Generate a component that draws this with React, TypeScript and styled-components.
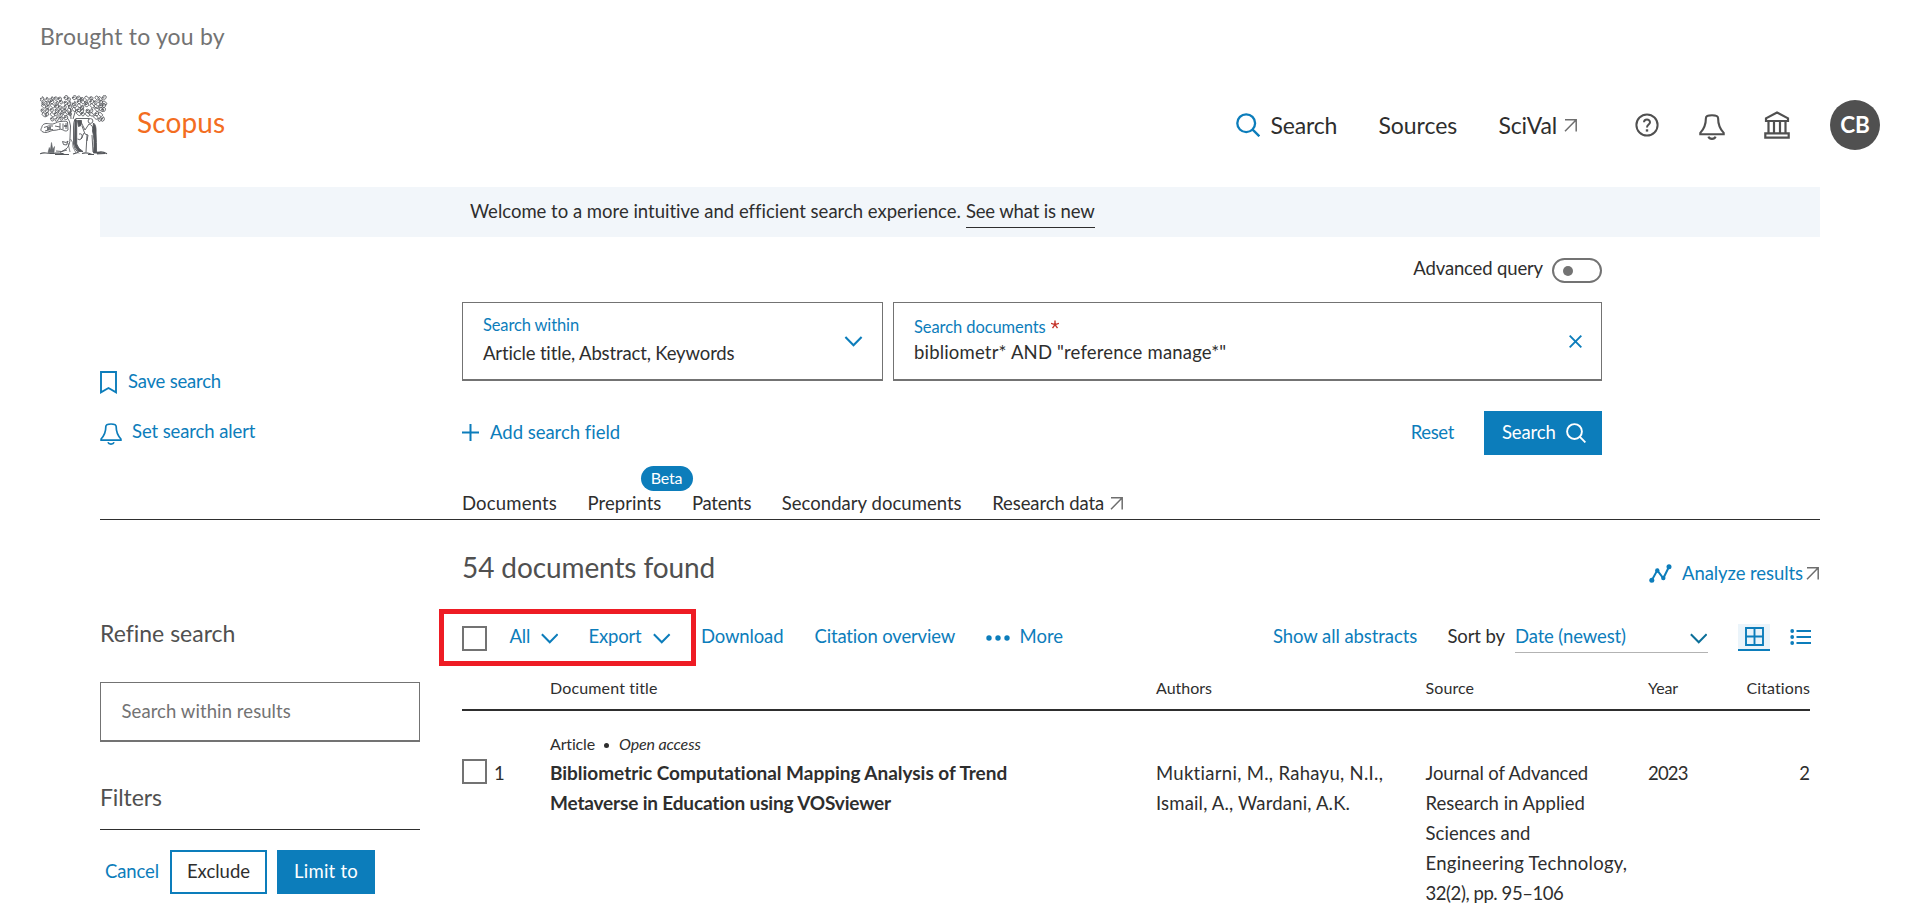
import React from 'react';
import styled, { createGlobalStyle } from 'styled-components';

const BLUE = '#0c7dbb';
const INK = '#2e2e2e';
const GREY = '#737373';

const Global = createGlobalStyle`
  * { box-sizing: border-box; }
  body { margin: 0; background: #fff; overflow: hidden; }
  svg { display: block; flex: none; fill: none; }
`;

const Page = styled.div`
  width: 1920px;
  height: 913px;
  overflow: hidden;
  font-family: Lato, 'Open Sans', sans-serif;
  font-size: 18.5px;
  line-height: 24px;
  font-variant-ligatures: none;
  color: ${INK};
`;

/* Text run with its own tracking */
const Txt = styled.span<{ $ls?: number }>`
  display: block;
  white-space: nowrap;
  letter-spacing: ${p => p.$ls ?? 0}px;
`;

const Sponsor = styled.div`
  padding: 21px 0 0 40px;
  height: 63px;
  font-size: 23px;
  line-height: 30px;
  color: ${GREY};
`;

const Masthead = styled.header`
  display: flex;
  align-items: center;
  height: 124px;
  padding: 0 40px;
`;

const Brand = styled.div`
  margin: -7px 0 0 29px;
  font-size: 28px;
  line-height: 36px;
  color: #f36d21;
`;

const Nav = styled.nav`
  display: grid;
  grid-template-columns: 34.5px 108px 120px 65px 71.5px 64px 65px 66px 50px;
  align-items: center;
  margin-left: auto;
  font-size: 23px;
  line-height: 30px;
`;

const Lowered = styled.div`
  padding-top: 4px;
`;

const Avatar = styled.div`
  width: 50px;
  height: 50px;
  border-radius: 50%;
  background: #505050;
  color: #fff;
  font-size: 22.5px;
  font-weight: 700;
  line-height: 49px;
  text-align: center;
`;

const Notice = styled.div`
  display: flex;
  align-items: baseline;
  height: 50px;
  margin: 0 100px;
  padding-left: 370px;
  background: #f2f6fa;
  line-height: 48px;
`;

const NoticeLink = styled.a`
  margin-left: 5px;
  line-height: 32px;
  border-bottom: 1px solid ${INK};
`;

const SearchArea = styled.section`
  display: grid;
  grid-template-columns: 362px 1140px;
  height: 218px;
  margin-left: 100px;
`;

const SavedActions = styled.div`
  display: flex;
  flex-direction: column;
  gap: 26px;
  padding-top: 132px;
  color: ${BLUE};
`;

const SavedAction = styled.a<{ $gap: number; $drop: number }>`
  display: flex;
  gap: ${p => p.$gap}px;
  height: 24px;
  svg { margin-top: ${p => p.$drop}px; }
`;

const AdvancedRow = styled.div`
  display: flex;
  justify-content: flex-end;
  gap: 9px;
  height: 65px;
  padding-top: 18px;
  line-height: 26px;
`;

const Toggle = styled.span`
  display: flex;
  align-items: center;
  width: 50px;
  height: 25px;
  margin-top: 3px;
  padding-left: 9px;
  border: 2px solid ${GREY};
  border-radius: 13px;
  &::before {
    content: '';
    width: 10px;
    height: 10px;
    border-radius: 50%;
    background: ${GREY};
  }
`;

const Fields = styled.div`
  display: flex;
  gap: 10px;
`;

const Field = styled.div<{ $w: number }>`
  display: flex;
  align-items: center;
  justify-content: space-between;
  width: ${p => p.$w}px;
  height: 79px;
  padding: 0 19px 0 20px;
  border: 1px solid ${GREY};
  border-bottom-width: 2px;
`;

const FieldText = styled.div<{ $top: number; $gap: number }>`
  align-self: flex-start;
  display: flex;
  flex-direction: column;
  gap: ${p => p.$gap}px;
  padding-top: ${p => p.$top}px;
`;

const FieldLabel = styled.div`
  display: flex;
  gap: 5px;
  height: 20px;
  font-size: 16.5px;
  line-height: 20px;
  color: ${BLUE};
`;

const Required = styled.svg`
  margin-top: 3px;
`;

const ActionsRow = styled.div`
  display: flex;
  height: 44px;
  margin-top: 30px;
  line-height: 42px;
  color: ${BLUE};
`;

const AddField = styled.a`
  display: flex;
  gap: 11px;
  margin-right: auto;
  svg { margin-top: 13px; }
`;

const SearchButton = styled.button`
  display: flex;
  gap: 10px;
  width: 118px;
  height: 44px;
  margin-left: 30px;
  padding: 0 0 0 18px;
  border: 0;
  background: ${BLUE};
  color: #fff;
  font: inherit;
  line-height: 42px;
  svg { margin-top: 12px; }
`;

const TabBar = styled.div`
  display: flex;
  align-items: flex-end;
  gap: 30.5px;
  height: 65px;
  margin: 0 100px;
  padding: 0 0 4px 362px;
  border-bottom: 1px solid ${INK};
`;

const Tab = styled.a`
  position: relative;
  display: flex;
  align-items: center;
  gap: 6px;
`;

const Beta = styled.span`
  position: absolute;
  left: 53px;
  top: -25px;
  width: 52px;
  height: 25px;
  border-radius: 13px;
  background: ${BLUE};
  color: #fff;
  font-size: 16px;
  letter-spacing: -0.2px;
  line-height: 24px;
  text-align: center;
`;

const Content = styled.main`
  display: grid;
  grid-template-columns: 320px 1358px;
  column-gap: 42px;
  margin-left: 100px;
`;

const Sidebar = styled.aside`
  padding-top: 98px;
`;

const SideTitle = styled.h2<{ $ruled?: boolean }>`
  margin: 0;
  padding: 0 0 ${p => (p.$ruled ? 17 : 0)}px 0;
  border-bottom: ${p => (p.$ruled ? `1px solid ${INK}` : '0')};
  font-size: 23px;
  font-weight: 400;
  line-height: 30px;
  color: #505050;
`;

const SideInput = styled.div`
  height: 60px;
  margin: 34px 0 40px;
  padding-left: 20.5px;
  border: 1px solid ${GREY};
  border-bottom-width: 2px;
  line-height: 56px;
  color: ${GREY};
`;

const FilterActions = styled.div`
  display: flex;
  gap: 10px;
  margin-top: 20px;
`;

const FilterButton = styled.button<{ $w: number; $kind: 'text' | 'outline' | 'solid' }>`
  display: flex;
  justify-content: center;
  width: ${p => p.$w}px;
  height: 44px;
  padding: 0 0 0 ${p => (p.$kind === 'text' ? 4 : 0)}px;
  border: ${p => (p.$kind === 'outline' ? `2px solid ${BLUE}` : '0')};
  background: ${p => (p.$kind === 'solid' ? BLUE : 'transparent')};
  color: ${p => (p.$kind === 'solid' ? '#fff' : p.$kind === 'text' ? BLUE : INK)};
  font: inherit;
  line-height: ${p => (p.$kind === 'outline' ? 38 : 42)}px;
`;

const ResultsHead = styled.div`
  display: flex;
  justify-content: space-between;
  height: 89px;
  padding-top: 29px;
`;

const Count = styled.h1`
  margin: 0;
  font-size: 28px;
  font-weight: 400;
  line-height: 36px;
  color: #505050;
`;

const Analyze = styled.a`
  display: flex;
  height: 24px;
  margin-top: 12px;
  align-items: center;
  gap: 10px;
  color: ${BLUE};
  svg:last-child { margin-left: -7px; margin-right: 1px; }
`;

const Toolbar = styled.div`
  position: relative;
  display: grid;
  grid-template-columns: 47.5px 31px 48px 64.5px 48px 113.5px 171px 34px 253.5px 174.5px 67.5px 223px 52px 21px;
  align-items: start;
  height: 57px;
  padding-top: 15px;
  color: ${BLUE};
`;

const Marker = styled.div`
  position: absolute;
  left: -23px;
  top: 0;
  width: 257px;
  height: 57px;
  border: 5px solid #ee1c24;
`;

const Drop = styled.div<{ $y: number }>`
  padding-top: ${p => p.$y}px;
`;

const Checkbox = styled.span`
  flex: none;
  width: 25px;
  height: 25px;
  margin-top: 2px;
  border: 2px solid ${GREY};
  background: #fff;
`;

const SortLabel = styled.span`
  color: ${INK};
`;

const SortSelect = styled.div`
  display: flex;
  justify-content: space-between;
  width: 193px;
  height: 29px;
  padding-right: 1px;
  border-bottom: 1px solid #b3b3b3;
  svg { margin-top: 9px; }
`;

const GridView = styled.div`
  display: flex;
  justify-content: center;
  width: 32px;
  height: 27px;
  padding-top: 3px;
  background: #ebf4fa;
  border-bottom: 2px solid ${BLUE};
`;

const TableHead = styled.div`
  display: grid;
  grid-template-columns: 88px 606px 269.5px 222.5px 90px 72px;
  width: 1348px;
  height: 45px;
  padding-top: 12px;
  border-bottom: 2px solid ${INK};
  font-size: 16px;
  line-height: 20px;
  & > :last-child { justify-self: end; }
`;

const TableRow = styled.div`
  display: grid;
  grid-template-columns: 88px 606px 269.5px 222.5px 90px 72px;
  width: 1348px;
  line-height: 30px;
`;

const Cell = styled.div<{ $end?: boolean }>`
  padding-top: 47px;
  justify-self: ${p => (p.$end ? 'end' : 'start')};
`;

const SelectCell = styled.div`
  display: flex;
  gap: 7px;
  padding-top: 47px;
  & > :first-child { margin-top: 1px; }
`;

const TitleCell = styled.div`
  padding-top: 23px;
  font-size: 19px;
  font-weight: 700;
`;

const Meta = styled.div`
  display: flex;
  height: 24px;
  font-size: 16px;
  font-weight: 400;
  line-height: 20px;
  i { letter-spacing: -0.12px; }
`;

const Dot = styled.span`
  width: 5px;
  height: 5px;
  margin: 9px 10px 0 9px;
  border-radius: 50%;
  background: ${INK};
`;

const ArrowOut = ({ s = 13 }: { s?: number }) => (
  <svg width={s} height={s} viewBox="0 0 13 13" stroke="#6e6e6e" strokeWidth="1.5">
    <path d="M1 .8H12.2V12.5M12 1 1 12.2" />
  </svg>
);

const Chevron = ({ w = 17.5, color = BLUE }: { w?: number; color?: string }) => (
  <svg width={w} height="11" viewBox="0 0 18 11" stroke={color} strokeWidth="2.1">
    <path d="m.9 1.1 8.1 8.2 8.1-8.2" />
  </svg>
);

const Magnifier = ({ s, color, sw }: { s: number; color: string; sw: number }) => (
  <svg width={s} height={s} viewBox="0 0 24 24" stroke={color} strokeWidth={sw}>
    <circle cx="10.2" cy="10.2" r="8.9" />
    <path d="m16.4 16.4 6.9 6.9" />
  </svg>
);

const Bell = ({ s, color, sw }: { s: number; color: string; sw: number }) => (
  <svg width={s} height={s} viewBox="0 0 26 26" stroke={color} strokeWidth={sw}>
    <path d="M1.3 20.2v-1.3C5 15 6.9 10 6.9 4.2 6.9 1.9 8.5 1.2 13 1.2s6.100.7 6.100 3c0 5.800 1.900 10.800 5.600 14.700v1.300Z" />
    <path d="M9.400 22.700c1 2.900 6.200 2.900 7.200 0" />
  </svg>
);

const Help = () => (
  <svg width="24" height="24" viewBox="0 0 24 24" stroke="#505050" strokeWidth="2">
    <circle cx="12" cy="12" r="10.600" />
    <path d="M9 9.300C9 5.500 15 5.600 15 9.200c0 2.300-3 2.300-3 5.200" />
    <path d="M12 16.300v2.300" strokeWidth="2.400" />
  </svg>
);

const Institution = () => (
  <svg width="26" height="28" viewBox="0 0 26 28" stroke="#505050" strokeWidth="2.200">
    <path d="M2 10V7.300L13 1.500l11 5.800V10Z" />
    <path d="M4.500 10v12M10 10v12M16 10v12M21.500 10v12" />
    <path d="M1.300 26.700v-4.400h23.400v4.400Z" />
  </svg>
);

const Bookmark = () => (
  <svg width="17" height="23" viewBox="0 0 17 23" stroke={BLUE} strokeWidth="1.900">
    <path d="M1 1h15v20.300l-7.500-4.300L1 21.300Z" />
  </svg>
);

/* Foliage: leaf outlines scattered over a jittered grid with a fixed seed */
const leafShapes = [
  'c1-3 4-3 4-.5s-3 3-4 .5l2.500-.8',
  'c-1 2.500.5 4 2 3s1.500-4-.3-4.200l-.7 2.600',
  'c2-1.500 3.600 0 3 1.800s-3.400 1.200-3-1.800l2 .9',
  'c.5-2 2.500-2.200 3-.7s2.200.6 1.400 2.300-3 .8-4.400-1.600',
];
let seed = 11;
const rand = () => {
  seed = (seed * 16807) % 2147483647;
  return seed / 2147483647;
};
const leaves: string[] = [];
for (let r = 0; r < 6; r++) {
  for (let c = 0; c < 15; c++) {
    const x = 0.6 + c * 4.4 + rand() * 1.6 - (c === 14 ? 1.5 : 0);
    const y = 2.2 + r * 3.900 + rand() * 1.5;
    const shape = leafShapes[Math.floor(rand() * 4)];
    const gap = (r === 5 && (c < 2 || c === 6 || (c > 6 && c < 12))) || (r === 4 && (c === 7 || c === 14));
    if (!gap) leaves.push(`M${x.toFixed(1)} ${y.toFixed(1)}${shape}`);
  }
}

const TreeLogo = () => (
  <svg width="68" height="60" viewBox="0 0 68 60" stroke="#53565a" strokeWidth=".9">
    <path d={leaves.join('')} />
    <path d="M27 22.500q3 3 3.500 8.500l-.5 12q0 8-4 11l-6 3.500M35 24q-1.500 3-1.500 8v17q.5 5 5.500 9.500M31 24l-.500-10M33 24l3-10M30 20l-4-5" />
    <path d="M30.500 44q3 3 2.500 8l3 6M28 48l2 9" strokeWidth=".7" />
    <path d="M2 31.500c1-3 4-3.500 8-2.500s7-2.500 10-2.500 5-1 7.500.5l.5 8c-2 2-4 .5-6-.5s-5 1-8 .8-7 3.500-11 1.700S2 33 2 31.500ZM4 32.500q5-2.500 9-1.500M5 36q4-1.500 8-1.500M20 28v6M23 28.500v6M26 28v6M15 31l5 1" />
    <path d="M8 32v3M10 31.500v3M24 31h3" strokeWidth="1.600" />
    <path d="M22.500 46.500l1 3 3 .5 1.500-4-2 1.500ZM16 56q6 1.500 11-1" />
    <path d="M35.500 23.500h14M35.500 24v25l3 6M41 27l4 8 4-6q4 1 4.500 7M42 31l3 8 3 1-1 6M47 40l-1 17M52 40l1 17M39 39q4-1 3 4-2 3-4.500 1M44 38l-3 6" />
    <circle cx="50.500" cy="26" r="2.400" />
    <path d="M37.500 25.500h4l-.5 5-2.500 1Z" fill="#53565a" />
    <path d="M53.500 28q3 2 2.500 10 .5 9 .5 20h-3q1.500-14-1-22Z" fill="#53565a" />
    <path d="M35 25h1.700v24q1.500 5 6.300 7.500h-4.500q-3-3-4-7Z" fill="#53565a" />
    <path d="M0 58.800q3-1.500 6-.8t10 .2 8 1.200M15 59.500h14M33 59l5-1.500M42 58.500q5-1.500 10 1M48 59.500h6M58 57.500q4-1.500 9 1.200" strokeWidth="1.200" />
    <path d="M8 57.500l1.300-5 1 3 1.200-8 1.300 7 1.700-3-.5 6Z" fill="#6b6e72" strokeWidth=".5" />
    <path d="M57 59v-2l8 1.500Z" fill="#53565a" />
  </svg>
);

const AnalyzeIcon = () => (
  <svg width="23" height="19" viewBox="0 0 23 19" stroke={BLUE} strokeWidth="2">
    <path d="M2.800 16.200 8.300 6.300 14.300 14.300 20 2.700" />
    <g fill={BLUE} stroke="none">
      <circle cx="2.800" cy="16.200" r="2.500" />
      <circle cx="8.300" cy="6.500" r="2.200" />
      <circle cx="14.300" cy="14" r="2.200" />
      <circle cx="20" cy="2.800" r="2.500" />
    </g>
  </svg>
);

const toolNames: [string, number][] = [['Download', -0.15], ['Citation overview', -0.16]];
const authors: [string, number][] = [['Muktiarni, M., Rahayu, N.I.,', 0.3], ['Ismail, A., Wardani, A.K.', 0.17]];
const source: [string, number][] = [
  ['Journal of Advanced', -0.1],
  ['Research in Applied', 0.02],
  ['Sciences and', 0.05],
  ['Engineering Technology,', 0.26],
  ['32(2), pp. 95–106', -0.43],
];

export default function App() {
  return (
    <Page>
      <Global />
      <Sponsor><Txt $ls={0.2}>Brought to you by</Txt></Sponsor>
      <Masthead>
        <TreeLogo />
        <Brand><Txt $ls={0.1}>Scopus</Txt></Brand>
        <Nav>
          <Magnifier s={24} color={BLUE} sw={2.3} />
          <Txt $ls={-0.15}>Search</Txt>
          <Txt $ls={-0.05}>Sources</Txt>
          <Txt $ls={-0.2}>SciVal</Txt>
          <ArrowOut s={13} />
          <Help />
          <Lowered><Bell s={26} color="#505050" sw={2.1} /></Lowered>
          <Institution />
          <Avatar>CB</Avatar>
        </Nav>
      </Masthead>
      <Notice>
        <Txt>Welcome to a more intuitive and efficient search experience.</Txt>
        <NoticeLink><Txt $ls={-0.14}>See what is new</Txt></NoticeLink>
      </Notice>

      <SearchArea>
        <SavedActions>
          <SavedAction $gap={11} $drop={2}><Bookmark /><Txt $ls={-0.2}>Save search</Txt></SavedAction>
          <SavedAction $gap={10} $drop={4}><Bell s={22} color={BLUE} sw={2} /><Txt $ls={-0.1}>Set search alert</Txt></SavedAction>
        </SavedActions>
        <div>
          <AdvancedRow><Txt $ls={-0.15}>Advanced query</Txt><Toggle /></AdvancedRow>
          <Fields>
            <Field $w={421}>
              <FieldText $top={12} $gap={6}>
                <FieldLabel><Txt $ls={-0.13}>Search within</Txt></FieldLabel>
                <Txt $ls={-0.14}>Article title, Abstract, Keywords</Txt>
              </FieldText>
              <Chevron w={19} />
            </Field>
            <Field $w={709}>
              <FieldText $top={14} $gap={3}>
                <FieldLabel>
                  <Txt $ls={-0.08}>Search documents</Txt>
                  <Required width="8" height="9" viewBox="0 0 9 9" stroke="#c5352b" strokeWidth="1.600">
                    <path d="M4.500 4.700V0M4.500 4.700 0 3.200M4.500 4.700 9 3.200M4.500 4.700 1.700 8.500M4.500 4.700 7.300 8.500" />
                  </Required>
                </FieldLabel>
                <Txt $ls={0.18}>bibliometr* AND "reference manage*"</Txt>
              </FieldText>
              <svg width="13" height="13" viewBox="0 0 13 13" stroke={BLUE} strokeWidth="1.900"><path d="m.7.7 11.600 11.600M12.300.7.7 12.300" /></svg>
            </Field>
          </Fields>
          <ActionsRow>
            <AddField>
              <svg width="17" height="17" viewBox="0 0 17 17" stroke={BLUE} strokeWidth="2"><path d="M8.500 0v17M0 8.500h17" /></svg>
              <Txt $ls={-0.02}>Add search field</Txt>
            </AddField>
            <Txt $ls={-0.35}>Reset</Txt>
            <SearchButton><Txt $ls={-0.15}>Search</Txt><Magnifier s={20} color="#fff" sw={2.3} /></SearchButton>
          </ActionsRow>
        </div>
      </SearchArea>

      <TabBar>
        <Tab><Txt $ls={0.18}>Documents</Txt></Tab>
        <Tab><Txt $ls={0.05}>Preprints</Txt><Beta>Beta</Beta></Tab>
        <Tab><Txt $ls={-0.25}>Patents</Txt></Tab>
        <Tab><Txt $ls={0.04}>Secondary documents</Txt></Tab>
        <Tab><Txt $ls={-0.1}>Research data</Txt><ArrowOut /></Tab>
      </TabBar>

      <Content>
        <Sidebar>
          <SideTitle><Txt>Refine search</Txt></SideTitle>
          <SideInput><Txt $ls={0.08}>Search within results</Txt></SideInput>
          <SideTitle $ruled><Txt $ls={-0.1}>Filters</Txt></SideTitle>
          <FilterActions>
            <FilterButton $w={60} $kind="text"><Txt $ls={-0.15}>Cancel</Txt></FilterButton>
            <FilterButton $w={97} $kind="outline"><Txt $ls={0}>Exclude</Txt></FilterButton>
            <FilterButton $w={98} $kind="solid"><Txt $ls={0.22}>Limit to</Txt></FilterButton>
          </FilterActions>
        </Sidebar>

        <div>
          <ResultsHead>
            <Count><Txt $ls={-0.1}>54 documents found</Txt></Count>
            <Analyze><AnalyzeIcon /><Txt $ls={-0.07}>Analyze results</Txt><ArrowOut /></Analyze>
          </ResultsHead>
          <Toolbar>
            <Marker />
            <Checkbox />
            <Txt $ls={-0.15}>All</Txt>
            <Drop $y={9}><Chevron /></Drop>
            <Txt $ls={-0.2}>Export</Txt>
            <Drop $y={9}><Chevron /></Drop>
            {toolNames.map(([t, ls]) => <Txt key={t} $ls={ls}>{t}</Txt>)}
            <Drop $y={11}>
              <svg width="24" height="6" viewBox="0 0 24 6"><g fill={BLUE}><circle cx="3" cy="3" r="2.700" /><circle cx="12" cy="3" r="2.700" /><circle cx="21" cy="3" r="2.700" /></g></svg>
            </Drop>
            <Txt $ls={0}>More</Txt>
            <Txt $ls={-0.08}>Show all abstracts</Txt>
            <SortLabel><Txt $ls={-0.12}>Sort by</Txt></SortLabel>
            <SortSelect><Txt $ls={-0.13}>Date (newest)</Txt><Chevron color="#0b6f99" /></SortSelect>
            <GridView>
              <svg width="19" height="19" viewBox="0 0 19 19" stroke={BLUE} strokeWidth="1.900"><path d="M1 1h17v17H1ZM9.500 1v17M1 9.500h17" /></svg>
            </GridView>
            <Drop $y={5}>
              <svg width="21" height="16" viewBox="0 0 21 16" stroke={BLUE} strokeWidth="2">
                <path d="M6.500 2H21M6.500 8H21M6.500 14H21" />
                <g fill={BLUE} stroke="none"><circle cx="2.200" cy="2" r="1.900" /><circle cx="2.200" cy="8" r="1.900" /><circle cx="2.200" cy="14" r="1.900" /></g>
              </svg>
            </Drop>
          </Toolbar>
          <TableHead>
            <span />
            <Txt $ls={0.15}>Document title</Txt>
            <Txt $ls={0}>Authors</Txt>
            <Txt $ls={0.1}>Source</Txt>
            <Txt $ls={-0.1}>Year</Txt>
            <Txt $ls={0.1}>Citations</Txt>
          </TableHead>
          <TableRow>
            <SelectCell><Checkbox /><Txt>1</Txt></SelectCell>
            <TitleCell>
              <Meta><Txt $ls={-0.15}>Article</Txt><Dot /><i>Open access</i></Meta>
              <Txt $ls={-0.03}>Bibliometric Computational Mapping Analysis of Trend</Txt>
              <Txt $ls={-0.16}>Metaverse in Education using VOSviewer</Txt>
            </TitleCell>
            <Cell>{authors.map(([t, ls]) => <Txt key={t} $ls={ls}>{t}</Txt>)}</Cell>
            <Cell>{source.map(([t, ls]) => <Txt key={t} $ls={ls}>{t}</Txt>)}</Cell>
            <Cell><Txt $ls={-0.8}>2023</Txt></Cell>
            <Cell $end><Txt>2</Txt></Cell>
          </TableRow>
        </div>
      </Content>
    </Page>
  );
}
